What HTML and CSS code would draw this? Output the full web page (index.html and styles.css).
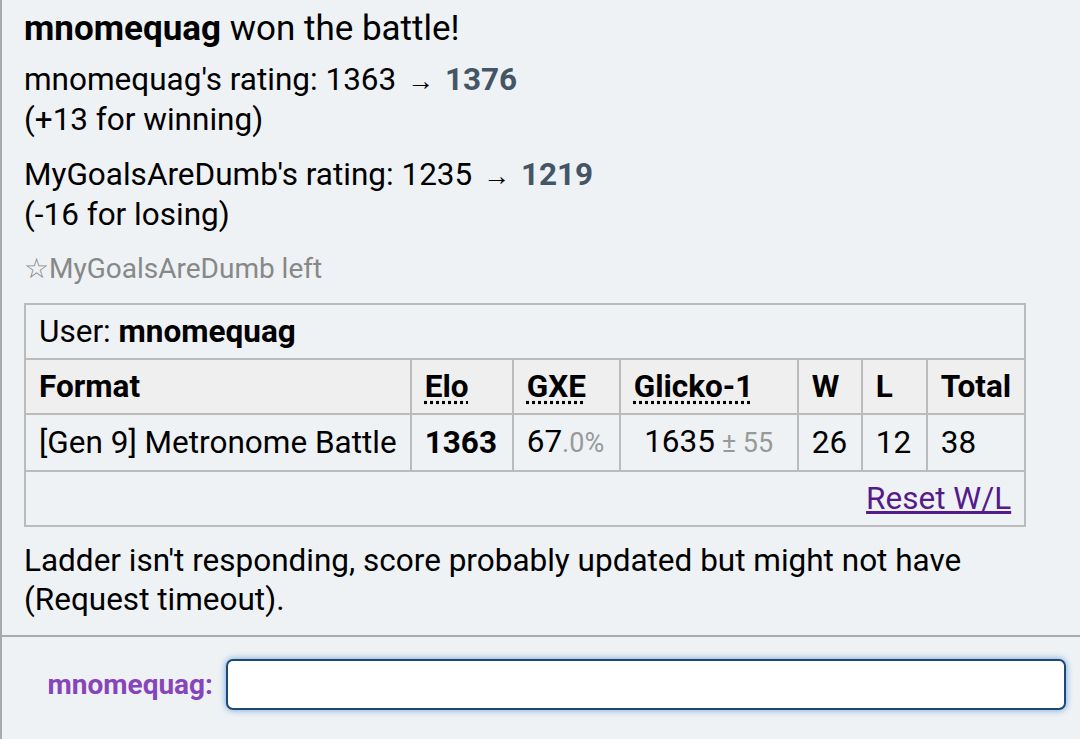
FILE: index.html
```html
<!DOCTYPE html>
<html lang="en">
<head>
    <meta charset="UTF-8">
    <meta name="viewport" content="width=device-width, initial-scale=1.0">
    <title>Battle log</title>
    <link rel="stylesheet" href="styles.css">
</head>
<body>
    <div class="log">
        <h2 class="win"><strong>mnomequag</strong> won the battle!</h2>
        <p class="msg rating">mnomequag's rating: 1363 <span class="arrow">&rarr;</span> <strong class="newr">1376</strong><br>(+13 for winning)</p>
        <p class="msg rating">MyGoalsAreDumb's rating: 1235 <span class="arrow">&rarr;</span> <strong class="newr">1219</strong><br>(-16 for losing)</p>
        <p class="msg notice"><span class="star">&#9734;</span>MyGoalsAreDumb left</p>
        <table class="ladder">
            <tr><td colspan="7" class="user">User: <strong>mnomequag</strong></td></tr>
            <tr class="head">
                <th class="c-format">Format</th>
                <th class="c-elo"><abbr title="Elo rating">Elo</abbr></th>
                <th class="c-gxe"><abbr title="user's percentage chance of winning a random battle">GXE</abbr></th>
                <th class="c-glicko"><abbr title="Glicko-1 rating system">Glicko-1</abbr></th>
                <th class="c-w">W</th>
                <th class="c-l">L</th>
                <th class="c-total">Total</th>
            </tr>
            <tr>
                <td>[Gen 9] Metronome Battle</td>
                <td><strong>1363</strong></td>
                <td>67<small>.0%</small></td>
                <td class="center">1635<small> &plusmn; 55</small></td>
                <td>26</td>
                <td>12</td>
                <td>38</td>
            </tr>
            <tr><td colspan="7" class="reset"><a href="#">Reset W/L</a></td></tr>
        </table>
        <p class="msg last">Ladder isn't responding, score probably updated but might not have<br>(Request timeout).</p>
    </div>
    <div class="chatbar">
        <label class="me" for="chat">mnomequag:</label>
        <input type="text" id="chat" class="textbox">
    </div>
</body>
</html>
```

FILE: styles.css
```css
*{
    margin: 0;
    padding: 0;
    box-sizing: border-box;
}
html,body{
    height: 100%;
}
body{
    background-color: #eef2f5;
    font-family: Roboto, "Liberation Sans", sans-serif;
    font-size: 31.5px;
    line-height: 39px;
    color: #000;
    border-left: 2px solid #a9a9a9;
    overflow: hidden;
}
.log{
    padding: 7px 22px 16px 22px;
    border-bottom: 2px solid #aaa;
}
.win{
    font-size: 35px;
    line-height: 44px;
    font-weight: normal;
    margin-bottom: 9px;
}
.msg{
    margin-bottom: 16px;
}
.msg.rating{
    line-height: 40px;
    margin-bottom: 15px;
}
.msg.last{
    margin-bottom: 0;
}
.arrow{
    font-size: 27px;
    line-height: 0;
    padding: 0 3px;
}
.newr{
    color: #445566;
}
.notice{
    color: #888;
    font-size: 28px;
    margin-top: -1px;
    margin-bottom: 15px;
}
.star{
    line-height: 1;
}
.ladder{
    border-collapse: collapse;
    border: 2px solid #bbb;
    margin-bottom: 14px;
}
.ladder td,.ladder th{
    border: 2px solid #bbb;
    padding: 7px 13px;
    line-height: 39px;
    text-align: left;
    white-space: nowrap;
}
.ladder .head th{
    background-color: #efefef;
}
.ladder abbr{
    text-decoration: underline dotted;
    text-underline-offset: 4px;
}
.ladder small{
    font-size: 27px;
    color: #999;
}
.ladder .center{
    text-align: center;
}
.c-elo{
    width: 102px;
}
.c-gxe{
    width: 107px;
}
.c-glicko{
    width: 178px;
}
.c-w{
    width: 64px;
}
.c-l{
    width: 65px;
}
.ladder .reset{
    text-align: right;
}
.reset a{
    color: #551a8b;
}
.chatbar{
    display: flex;
    align-items: center;
    padding: 22px 14px 0 22px;
}
.me{
    color: #8844bb;
    font-weight: bold;
    font-size: 28px;
    width: 202px;
    text-align: right;
    padding-right: 13px;
}
.textbox{
    flex: 1;
    height: 51px;
    border: 2px solid #1c4a76;
    border-radius: 7px;
    background-color: #fff;
    box-shadow: 0 0 7px #6a9fd8;
    outline: none;
    font-size: 25px;
    padding: 0 8px;
}
```
